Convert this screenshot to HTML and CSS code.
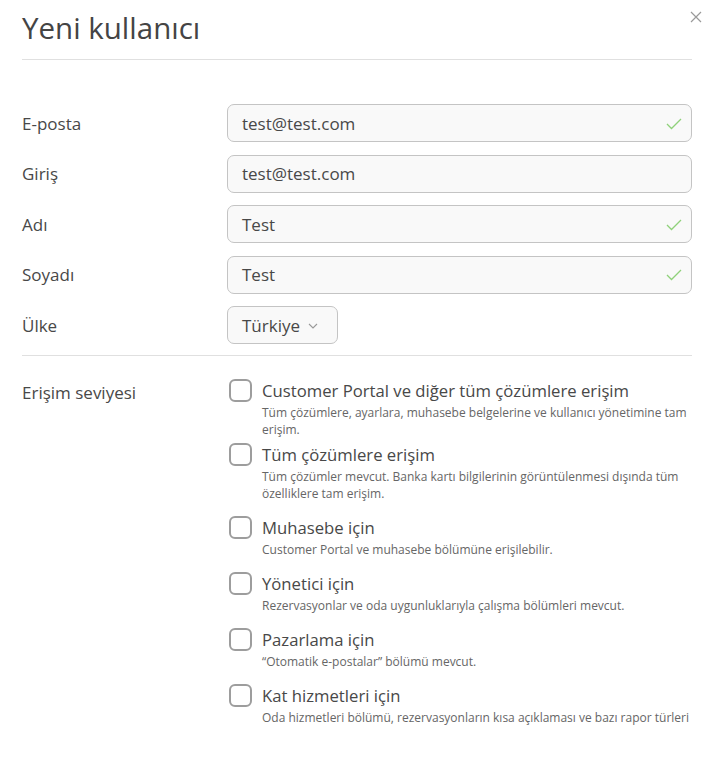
FILE: index.html
```html
<!DOCTYPE html>
<html lang="tr">
<head>
<meta charset="utf-8">
<title>Yeni kullanıcı</title>
<link rel="stylesheet" href="styles.css">
</head>
<body>
<div class="modal">
  <button class="close" aria-label="Kapat">
    <svg width="12" height="12" viewBox="0 0 12 12"><path d="M1 1 L11 11 M11 1 L1 11" stroke="#9a9a9a" stroke-width="1.2" fill="none"/></svg>
  </button>
  <h1 class="title">Yeni kullanıcı</h1>
  <hr class="sep">
  <div class="fields">
    <div class="row">
      <label class="label">E-posta</label>
      <div class="input"><span>test@test.com</span><svg class="ok" width="16" height="12" viewBox="0 0 16 12"><path d="M1 6 L5.5 10.5 L15 1" stroke="#8fd17a" stroke-width="1.3" fill="none"/></svg></div>
    </div>
    <div class="row">
      <label class="label">Giriş</label>
      <div class="input"><span>test@test.com</span></div>
    </div>
    <div class="row">
      <label class="label">Adı</label>
      <div class="input"><span>Test</span><svg class="ok" width="16" height="12" viewBox="0 0 16 12"><path d="M1 6 L5.5 10.5 L15 1" stroke="#8fd17a" stroke-width="1.3" fill="none"/></svg></div>
    </div>
    <div class="row">
      <label class="label">Soyadı</label>
      <div class="input"><span>Test</span><svg class="ok" width="16" height="12" viewBox="0 0 16 12"><path d="M1 6 L5.5 10.5 L15 1" stroke="#8fd17a" stroke-width="1.3" fill="none"/></svg></div>
    </div>
    <div class="row">
      <label class="label">Ülke</label>
      <div class="select"><span>Türkiye</span><svg width="10" height="6" viewBox="0 0 10 6"><path d="M1 1 L5 5 L9 1" stroke="#999" stroke-width="1.1" fill="none"/></svg></div>
    </div>
  </div>
  <hr class="sep sep-mid">
  <div class="access">
    <div class="label access-label">Erişim seviyesi</div>
    <div class="options">
      <div class="opt opt-first">
        <div class="opt-head"><span class="box"></span><span class="opt-title">Customer Portal ve diğer tüm çözümlere erişim</span></div>
        <p class="opt-desc">Tüm çözümlere, ayarlara, muhasebe belgelerine ve kullanıcı yönetimine tam erişim.</p>
      </div>
      <div class="opt">
        <div class="opt-head"><span class="box"></span><span class="opt-title">Tüm çözümlere erişim</span></div>
        <p class="opt-desc">Tüm çözümler mevcut. Banka kartı bilgilerinin görüntülenmesi dışında tüm özelliklere tam erişim.</p>
      </div>
      <div class="opt">
        <div class="opt-head"><span class="box"></span><span class="opt-title">Muhasebe için</span></div>
        <p class="opt-desc">Customer Portal ve muhasebe bölümüne erişilebilir.</p>
      </div>
      <div class="opt">
        <div class="opt-head"><span class="box"></span><span class="opt-title">Yönetici için</span></div>
        <p class="opt-desc">Rezervasyonlar ve oda uygunluklarıyla çalışma bölümleri mevcut.</p>
      </div>
      <div class="opt">
        <div class="opt-head"><span class="box"></span><span class="opt-title">Pazarlama için</span></div>
        <p class="opt-desc">“Otomatik e-postalar” bölümü mevcut.</p>
      </div>
      <div class="opt">
        <div class="opt-head"><span class="box"></span><span class="opt-title">Kat hizmetleri için</span></div>
        <p class="opt-desc">Oda hizmetleri bölümü, rezervasyonların kısa açıklaması ve bazı rapor türleri</p>
      </div>
    </div>
  </div>
</div>
</body>
</html>
```
FILE: styles.css
```css
* { box-sizing: border-box; }
html, body { margin: 0; padding: 0; background: #fff; }
body {
  font-family: "Open Sans", "Noto Sans", "Liberation Sans", sans-serif;
  color: #444;
}
.modal {
  position: relative;
  width: 712px;
  padding: 0 20px 0 22px;
}
.close {
  position: absolute;
  top: 11px;
  right: 10px;
  width: 12px;
  height: 12px;
  padding: 0;
  border: 0;
  background: none;
  display: block;
}
.close svg { display: block; }
.title {
  margin: 0;
  padding-top: 8px;
  height: 59px;
  font-size: 29.5px;
  line-height: 40px;
  font-weight: 400;
  color: #444;
}
.sep {
  margin: 0;
  border: 0;
  border-top: 1px solid #e0e0e0;
  height: 0;
}
.fields {
  padding-top: 44px;
  display: flex;
  flex-direction: column;
  gap: 12.6px;
}
.row {
  display: flex;
  align-items: center;
  height: 38px;
}
.label {
  width: 205px;
  flex: none;
  font-size: 17px;
  color: #484848;
}
.input, .select {
  height: 38px;
  border: 1px solid #c4c4c4;
  border-radius: 7px;
  background: #f9f9f9;
  display: flex;
  align-items: center;
  padding: 0 9px 0 14px;
  font-size: 17px;
  color: #484848;
}
.input { flex: 1; justify-content: space-between; }
.input .ok { display: block; margin-top: 1px; }
.select { width: 111px; gap: 8px; }
.select svg { display: block; margin-top: 1px; }
.sep-mid { margin-top: 11px; }
.access {
  display: flex;
  padding-top: 23px;
}
.access-label { line-height: 22px; padding-top: 3px; }
.options { flex: 1; }
.opt { margin-bottom: 14px; }
.opt-first { margin-bottom: 5px; }
.opt-head {
  display: flex;
  align-items: center;
  height: 22px;
  gap: 10px;
  margin-left: 2px;
}
.box {
  width: 23px;
  height: 23px;
  flex: none;
  border: 2px solid #9d9d9d;
  border-radius: 6px;
  background: #fff;
}
.opt-title {
  font-size: 16.7px;
  color: #484848;
  white-space: nowrap;
}
.opt-desc {
  margin: 3px 0 0 35px;
  font-size: 12px;
  line-height: 17px;
  color: #666;
}
```
